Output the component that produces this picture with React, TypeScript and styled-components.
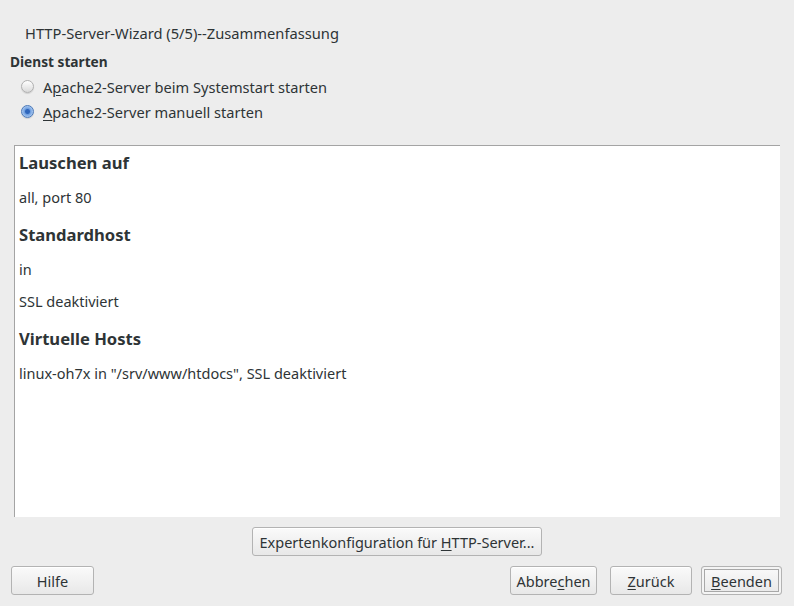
import React from "react";
import styled, { createGlobalStyle } from "styled-components";

const GlobalStyle = createGlobalStyle`
  html, body {
    margin: 0;
    padding: 0;
    background: #ededed;
  }
  #root {
    width: 794px;
    height: 606px;
  }
`;

const Window = styled.div`
  width: 794px;
  height: 606px;
  display: flex;
  flex-direction: column;
  background: #ededed;
  color: #2e3436;
  font-family: "Noto Sans", "DejaVu Sans", sans-serif;
  font-size: 14.5px;
  box-sizing: border-box;
`;

const Title = styled.div`
  margin: 24px 0 0 25px;
  font-size: 14.7px;
  line-height: 18px;
`;

const Group = styled.div`
  margin: 11px 0 0 10px;
  display: flex;
  flex-direction: column;
`;

const GroupLabel = styled.div`
  font-weight: bold;
  font-size: 13.7px;
  line-height: 18px;
  margin-bottom: 3px;
`;

const RadioRow = styled.label`
  display: flex;
  align-items: center;
  height: 25px;
  padding-left: 11px;
  gap: 9px;
  font-size: 14.6px;
`;

const RadioDot = styled.span<{ $checked?: boolean }>`
  width: 13px;
  height: 13px;
  border-radius: 50%;
  box-sizing: border-box;
  border: 1px solid ${(p) => (p.$checked ? "#4a78b8" : "#b0b0b0")};
  background: ${(p) =>
    p.$checked
      ? "radial-gradient(circle at 50% 50%, #2f66bb 0 2px, #6f9fe0 3px, #b3cff2 6px)"
      : "linear-gradient(#ffffff, #d9d9d9)"};
  box-shadow: 0 1px 1px rgba(0, 0, 0, 0.12);
`;

const Key = styled.span`
  text-decoration: underline;
  text-underline-offset: 2px;
`;

const Panel = styled.div`
  margin: 21px 14px 0 14px;
  height: 372px;
  background: #ffffff;
  border-top: 1px solid #a4a4a4;
  border-left: 1px solid #a4a4a4;
  padding: 7px 4px 0 4px;
  box-sizing: border-box;
`;

const Heading = styled.div<{ $first?: boolean }>`
  font-weight: bold;
  font-size: 16.6px;
  line-height: 20px;
  margin-top: ${(p) => (p.$first ? "0" : "19px")};
`;

const Para = styled.div<{ $afterHeading?: boolean }>`
  font-size: 14.5px;
  line-height: 18px;
  margin-top: ${(p) => (p.$afterHeading ? "15px" : "14px")};
`;

const ExpertRow = styled.div`
  display: flex;
  justify-content: center;
  margin-top: 10px;
`;

const ButtonRow = styled.div`
  display: flex;
  align-items: center;
  margin: 10px 12px 0 11px;
`;

const Spacer = styled.div`
  flex: 1;
`;

const Button = styled.button<{ $width: number; $space?: number; $default?: boolean }>`
  width: ${(p) => p.$width}px;
  height: 29px;
  margin-left: ${(p) => p.$space ?? 0}px;
  box-sizing: border-box;
  border: 1px solid #b3b3b3;
  border-radius: 3px;
  background: linear-gradient(#fafafa, #e8e8e8);
  font-family: "Noto Sans", "DejaVu Sans", sans-serif;
  font-size: 14.5px;
  color: #2e3436;
  padding: 0;
  box-shadow: ${(p) =>
    p.$default
      ? "inset 0 0 0 2px #f4f4f4, inset 0 0 0 3px #a8a8a8"
      : "inset 0 1px 0 #ffffff"};
`;

export default function App() {
  return (
    <>
      <GlobalStyle />
      <Window>
        <Title>HTTP-Server-Wizard (5/5)--Zusammenfassung</Title>
        <Group>
          <GroupLabel>Dienst starten</GroupLabel>
          <RadioRow>
            <RadioDot />
            <span>
              A<Key>p</Key>ache2-Server beim Systemstart starten
            </span>
          </RadioRow>
          <RadioRow>
            <RadioDot $checked />
            <span>
              <Key>A</Key>pache2-Server manuell starten
            </span>
          </RadioRow>
        </Group>
        <Panel>
          <Heading $first>Lauschen auf</Heading>
          <Para $afterHeading>all, port 80</Para>
          <Heading>Standardhost</Heading>
          <Para $afterHeading>in</Para>
          <Para>SSL deaktiviert</Para>
          <Heading>Virtuelle Hosts</Heading>
          <Para $afterHeading>
            linux-oh7x in "/srv/www/htdocs", SSL deaktiviert
          </Para>
        </Panel>
        <ExpertRow>
          <Button $width={290}>
            Expertenkonfiguration für <Key>H</Key>TTP-Server...
          </Button>
        </ExpertRow>
        <ButtonRow>
          <Button $width={83}>Hilfe</Button>
          <Spacer />
          <Button $width={87}>
            Abbre<Key>c</Key>hen
          </Button>
          <Button $width={82} $space={13}>
            <Key>Z</Key>urück
          </Button>
          <Button $width={81} $space={9} $default>
            <Key>B</Key>eenden
          </Button>
        </ButtonRow>
      </Window>
    </>
  );
}
